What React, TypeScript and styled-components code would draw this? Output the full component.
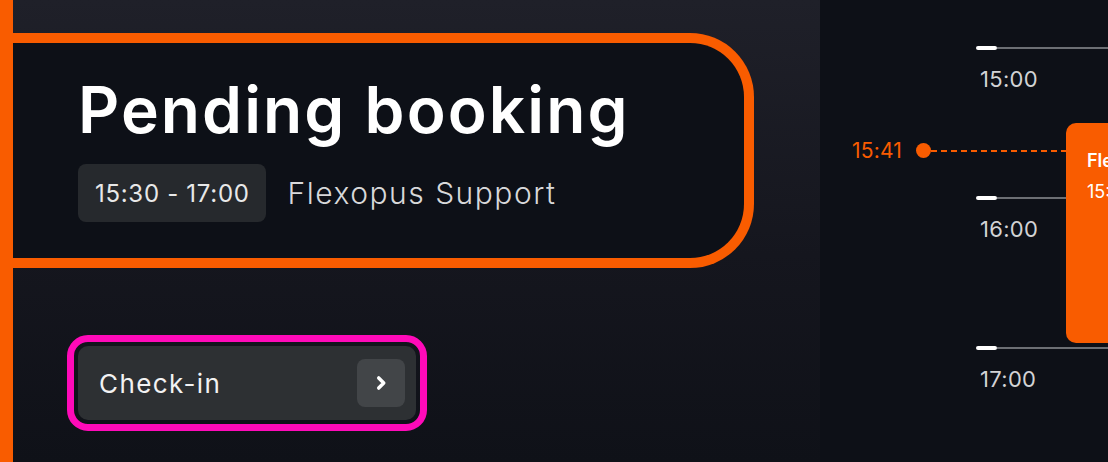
import React from "react";
import styled, { createGlobalStyle } from "styled-components";

const GlobalStyle = createGlobalStyle`
  html, body, #root {
    margin: 0;
    padding: 0;
    height: 100%;
  }
  body {
    background: #0d1017;
    font-family: "Inter", "Noto Sans", sans-serif;
    overflow: hidden;
  }
`;

const ORANGE = "#f95c00";
const HOUR_PX = 150;
const START_HOUR = 15;
const TOP_OFFSET = 48;

const toY = (h: number, m: number) =>
  TOP_OFFSET + (h - START_HOUR + m / 60) * HOUR_PX;

const Screen = styled.div`
  display: flex;
  width: 1108px;
  height: 462px;
`;

const MainPanel = styled.section`
  width: 807px;
  border-left: 13px solid ${ORANGE};
  background: linear-gradient(180deg, #1f2029 0%, #15161e 55%, #0f1118 100%);
  padding-top: 33px;
  display: flex;
  flex-direction: column;
`;

const BookingCard = styled.div`
  width: 666px;
  border: 10px solid ${ORANGE};
  border-left: none;
  border-radius: 0 64px 64px 0;
  background: #0d1017;
  padding: 30px 0 36px 65px;
`;

const Title = styled.h1`
  margin: 0;
  color: #ffffff;
  font-size: 64px;
  font-weight: 600;
  letter-spacing: 2.1px;
  line-height: 74px;
`;

const MetaRow = styled.div`
  display: flex;
  align-items: center;
  gap: 22px;
  margin-top: 17px;
`;

const TimeChip = styled.span`
  display: inline-flex;
  align-items: center;
  height: 58px;
  padding: 0 16px 0 17px;
  border-radius: 8px;
  background: #26292d;
  color: #e8e8e8;
  font-size: 24px;
  letter-spacing: 0.7px;
`;

const Organizer = styled.span`
  color: #d8d8da;
  font-size: 30px;
  font-weight: 300;
  letter-spacing: 1.5px;
`;

const ActionArea = styled.div`
  padding: 78px 0 0 65px;
`;

const CheckInButton = styled.button`
  display: flex;
  align-items: center;
  justify-content: space-between;
  width: 338px;
  height: 74px;
  padding: 0 11px 0 21px;
  border: none;
  border-radius: 10px;
  background: #2d3033;
  color: #f2f2f2;
  font-family: inherit;
  font-size: 26px;
  letter-spacing: 1.4px;
  outline: 7px solid #ff0ab9;
  outline-offset: 4px;
  cursor: pointer;
`;

const ArrowBox = styled.span`
  display: grid;
  place-items: center;
  width: 48px;
  height: 48px;
  border-radius: 8px;
  background: #424548;
`;

const TimelinePanel = styled.aside`
  position: relative;
  flex: 1;
  background: #0d1017;
  overflow: hidden;
`;

const HourRow = styled.div`
  position: absolute;
  left: 156px;
  right: 0;
`;

const HourLine = styled.div`
  display: flex;
  align-items: center;
  height: 4px;
  margin-top: -2px;
`;

const HourTick = styled.span`
  width: 21px;
  height: 4px;
  border-radius: 2px;
  background: #ffffff;
`;

const HourRule = styled.span`
  flex: 1;
  height: 1.5px;
  background: #6c6f74;
`;

const HourLabel = styled.div`
  margin: 16px 0 0 4px;
  color: #d2d3d5;
  font-size: 22px;
  letter-spacing: 0.3px;
`;

const NowRow = styled.div`
  position: absolute;
  left: 32px;
  right: 0;
  display: flex;
  align-items: center;
  height: 20px;
  margin-top: -10px;
  z-index: 1;
`;

const NowLabel = styled.span`
  width: 64px;
  color: ${ORANGE};
  font-size: 21px;
  letter-spacing: 0.2px;
`;

const NowDot = styled.span`
  width: 15px;
  height: 15px;
  border-radius: 50%;
  background: ${ORANGE};
`;

const NowDash = styled.span`
  flex: 1;
  height: 2px;
  background: repeating-linear-gradient(
    90deg,
    ${ORANGE} 0 6px,
    transparent 6px 10px
  );
`;

const EventBlock = styled.div`
  position: absolute;
  left: 246px;
  width: 120px;
  padding: 27px 0 0 21px;
  border-radius: 10px;
  background: ${ORANGE};
  color: #ffffff;
  z-index: 2;
  box-sizing: border-box;
`;

const EventTitle = styled.div`
  font-size: 18px;
  font-weight: 600;
  white-space: nowrap;
`;

const EventTime = styled.div`
  margin-top: 10px;
  font-size: 18px;
  white-space: nowrap;
`;

const ChevronRight = () => (
  <svg width="22" height="22" viewBox="0 0 24 24" fill="none">
    <path
      d="M9.5 6.5l5.5 5.5-5.5 5.5"
      stroke="#ffffff"
      strokeWidth="3.8"
      strokeLinecap="round"
      strokeLinejoin="round"
    />
  </svg>
);

const hours = [15, 16, 17];

export default function App() {
  const eventTop = toY(15, 30);
  const eventBottom = toY(17, 0) - 5;

  return (
    <>
      <GlobalStyle />
      <Screen>
        <MainPanel>
          <BookingCard>
            <Title>Pending booking</Title>
            <MetaRow>
              <TimeChip>15:30 - 17:00</TimeChip>
              <Organizer>Flexopus Support</Organizer>
            </MetaRow>
          </BookingCard>
          <ActionArea>
            <CheckInButton>
              Check-in
              <ArrowBox>
                <ChevronRight />
              </ArrowBox>
            </CheckInButton>
          </ActionArea>
        </MainPanel>

        <TimelinePanel>
          {hours.map((h) => (
            <HourRow key={h} style={{ top: toY(h, 0) }}>
              <HourLine>
                <HourTick />
                <HourRule />
              </HourLine>
              <HourLabel>{h}:00</HourLabel>
            </HourRow>
          ))}
          <NowRow style={{ top: toY(15, 41) }}>
            <NowLabel>15:41</NowLabel>
            <NowDot />
            <NowDash />
          </NowRow>
          <EventBlock style={{ top: eventTop, height: eventBottom - eventTop }}>
            <EventTitle>Flexopus Support</EventTitle>
            <EventTime>15:30 - 17:00</EventTime>
          </EventBlock>
        </TimelinePanel>
      </Screen>
    </>
  );
}
